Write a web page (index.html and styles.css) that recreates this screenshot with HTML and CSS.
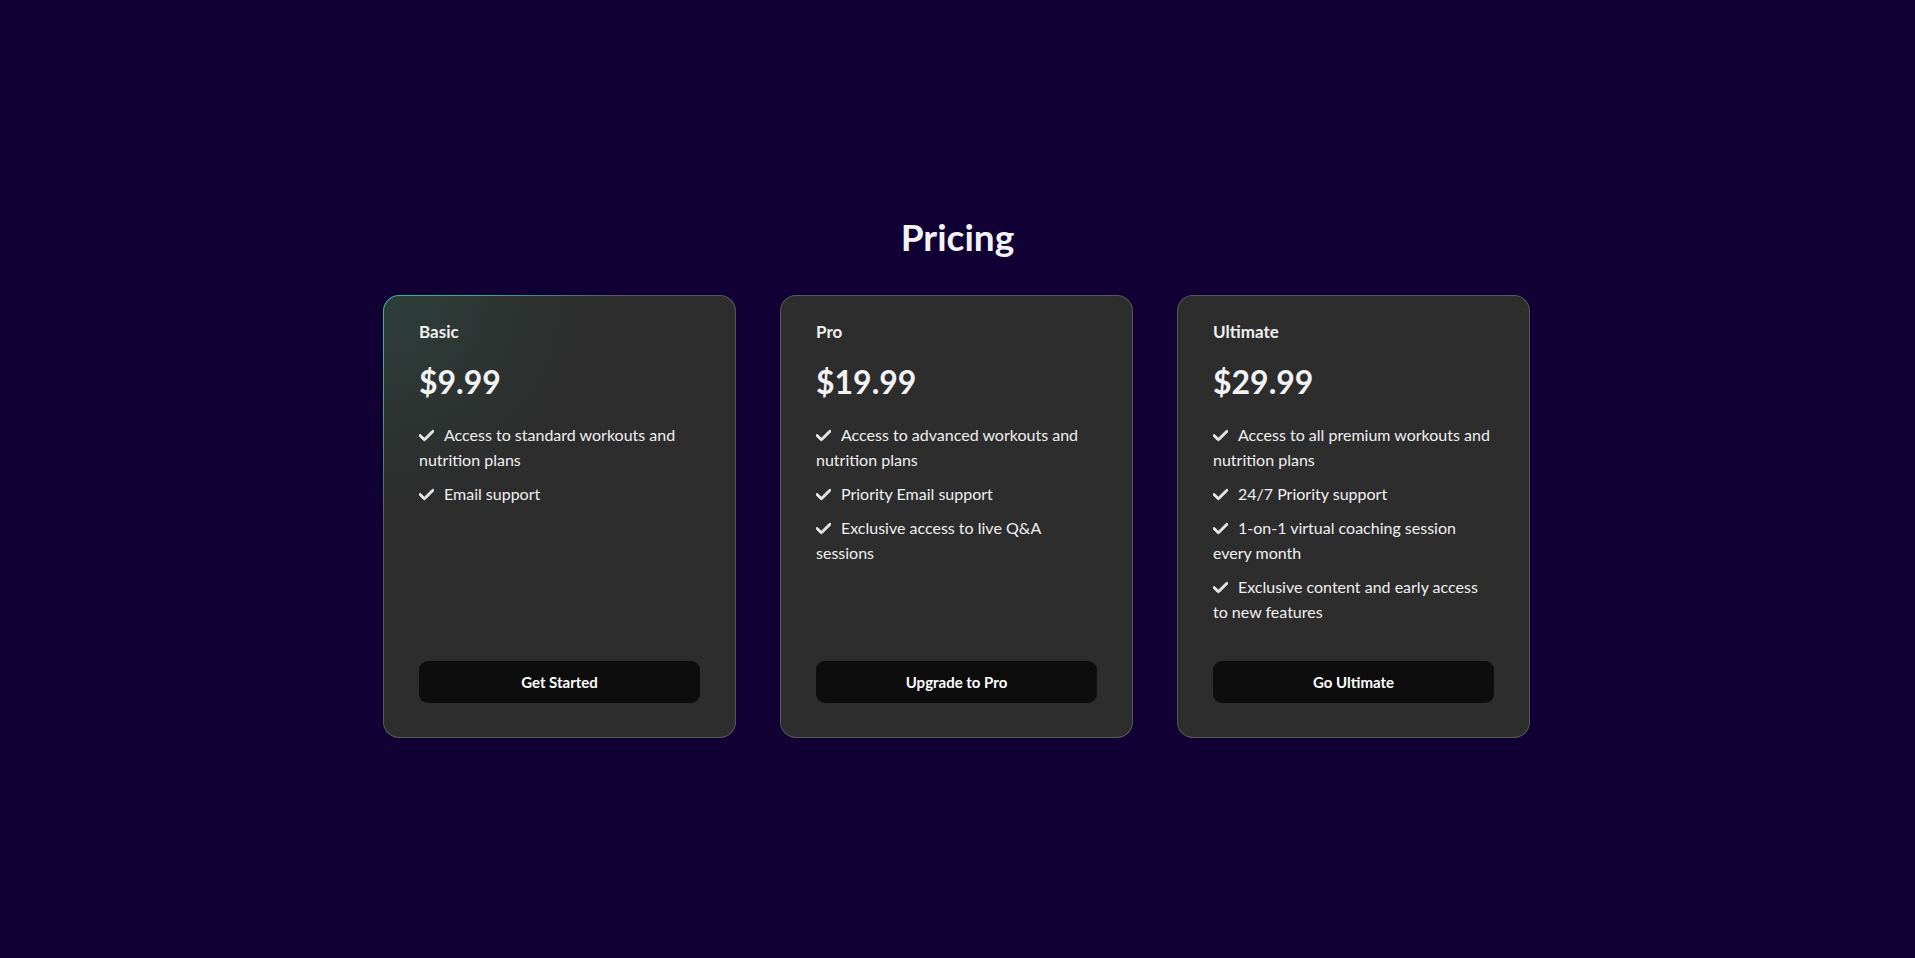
FILE: index.html
```html
<!DOCTYPE html>
<html lang="en">
<head>
<meta charset="utf-8">
<title>Pricing</title>
<link rel="stylesheet" href="styles.css">
</head>
<body>
<section class="pricing">
  <h2 class="pricing-title">Pricing</h2>
  <div class="plans">
    <div class="plan plan-active">
      <h3 class="plan-name">Basic</h3>
      <p class="plan-price">$9.99</p>
      <ul class="features">
        <li><svg class="check" viewBox="0 0 448 512"><path d="M438.6 105.4c12.5 12.5 12.5 32.8 0 45.3l-256 256c-12.5 12.5-32.8 12.5-45.3 0l-128-128c-12.5-12.5-12.5-32.8 0-45.3s32.8-12.5 45.3 0L160 338.7 393.4 105.4c12.5-12.5 32.8-12.5 45.3 0z"/></svg>Access to standard workouts and nutrition plans</li>
        <li><svg class="check" viewBox="0 0 448 512"><path d="M438.6 105.4c12.5 12.5 12.5 32.8 0 45.3l-256 256c-12.5 12.5-32.8 12.5-45.3 0l-128-128c-12.5-12.5-12.5-32.8 0-45.3s32.8-12.5 45.3 0L160 338.7 393.4 105.4c12.5-12.5 32.8-12.5 45.3 0z"/></svg>Email support</li>
      </ul>
      <button class="plan-btn">Get Started</button>
    </div>
    <div class="plan">
      <h3 class="plan-name">Pro</h3>
      <p class="plan-price">$19.99</p>
      <ul class="features">
        <li><svg class="check" viewBox="0 0 448 512"><path d="M438.6 105.4c12.5 12.5 12.5 32.8 0 45.3l-256 256c-12.5 12.5-32.8 12.5-45.3 0l-128-128c-12.5-12.5-12.5-32.8 0-45.3s32.8-12.5 45.3 0L160 338.7 393.4 105.4c12.5-12.5 32.8-12.5 45.3 0z"/></svg>Access to advanced workouts and nutrition plans</li>
        <li><svg class="check" viewBox="0 0 448 512"><path d="M438.6 105.4c12.5 12.5 12.5 32.8 0 45.3l-256 256c-12.5 12.5-32.8 12.5-45.3 0l-128-128c-12.5-12.5-12.5-32.8 0-45.3s32.8-12.5 45.3 0L160 338.7 393.4 105.4c12.5-12.5 32.8-12.5 45.3 0z"/></svg>Priority Email support</li>
        <li><svg class="check" viewBox="0 0 448 512"><path d="M438.6 105.4c12.5 12.5 12.5 32.8 0 45.3l-256 256c-12.5 12.5-32.8 12.5-45.3 0l-128-128c-12.5-12.5-12.5-32.8 0-45.3s32.8-12.5 45.3 0L160 338.7 393.4 105.4c12.5-12.5 32.8-12.5 45.3 0z"/></svg>Exclusive access to live Q&amp;A sessions</li>
      </ul>
      <button class="plan-btn">Upgrade to Pro</button>
    </div>
    <div class="plan">
      <h3 class="plan-name">Ultimate</h3>
      <p class="plan-price">$29.99</p>
      <ul class="features">
        <li><svg class="check" viewBox="0 0 448 512"><path d="M438.6 105.4c12.5 12.5 12.5 32.8 0 45.3l-256 256c-12.5 12.5-32.8 12.5-45.3 0l-128-128c-12.5-12.5-12.5-32.8 0-45.3s32.8-12.5 45.3 0L160 338.7 393.4 105.4c12.5-12.5 32.8-12.5 45.3 0z"/></svg>Access to all premium workouts and nutrition plans</li>
        <li><svg class="check" viewBox="0 0 448 512"><path d="M438.6 105.4c12.5 12.5 12.5 32.8 0 45.3l-256 256c-12.5 12.5-32.8 12.5-45.3 0l-128-128c-12.5-12.5-12.5-32.8 0-45.3s32.8-12.5 45.3 0L160 338.7 393.4 105.4c12.5-12.5 32.8-12.5 45.3 0z"/></svg>24/7 Priority support</li>
        <li><svg class="check" viewBox="0 0 448 512"><path d="M438.6 105.4c12.5 12.5 12.5 32.8 0 45.3l-256 256c-12.5 12.5-32.8 12.5-45.3 0l-128-128c-12.5-12.5-12.5-32.8 0-45.3s32.8-12.5 45.3 0L160 338.7 393.4 105.4c12.5-12.5 32.8-12.5 45.3 0z"/></svg>1-on-1 virtual coaching session every month</li>
        <li><svg class="check" viewBox="0 0 448 512"><path d="M438.6 105.4c12.5 12.5 12.5 32.8 0 45.3l-256 256c-12.5 12.5-32.8 12.5-45.3 0l-128-128c-12.5-12.5-12.5-32.8 0-45.3s32.8-12.5 45.3 0L160 338.7 393.4 105.4c12.5-12.5 32.8-12.5 45.3 0z"/></svg>Exclusive content and early access to new features</li>
      </ul>
      <button class="plan-btn">Go Ultimate</button>
    </div>
  </div>
</section>
</body>
</html>
```
FILE: styles.css
```css
* { box-sizing: border-box; }
html, body { margin: 0; padding: 0; }
body {
  background: #110033;
  color: #f2f2f2;
  font-family: "Lato", "Noto Sans", sans-serif;
  min-height: 100vh;
}
.pricing {
  min-height: 100vh;
  display: flex;
  flex-direction: column;
  align-items: center;
  justify-content: center;
  padding: 0 0 8px 0;
}
.pricing-title {
  margin: 0 0 34px;
  font-size: 37px;
  line-height: 48px;
  font-weight: 700;
  color: #f3f3f5;
}
.plans {
  display: grid;
  grid-template-columns: repeat(3, 353px);
  gap: 44px;
  margin-right: 2px;
}
.plan {
  display: flex;
  flex-direction: column;
  padding: 24px 35px 34px;
  border-radius: 16px;
  border: 1px solid transparent;
  background:
    linear-gradient(#2d2d2d, #2d2d2d) padding-box,
    linear-gradient(#575757, #575757) border-box;
  min-height: 443px;
}
.plan-active {
  background:
    radial-gradient(circle at 0 0, rgba(46, 180, 146, 0.13), rgba(46, 180, 146, 0) 200px) padding-box,
    linear-gradient(#2d2d2d, #2d2d2d) padding-box,
    radial-gradient(circle at 0 0, #2fbf98 0, #35a587 110px, #575757 240px) border-box;
}
.plan-name {
  margin: 0;
  font-size: 17px;
  line-height: 24px;
  font-weight: 700;
  color: #f0f0f0;
}
.plan-price {
  margin: 18px 0 0;
  font-size: 32px;
  line-height: 40px;
  font-weight: 700;
  color: #f3f3f5;
}
.features {
  list-style: none;
  margin: 20px 0 0;
  padding: 0;
  font-size: 16px;
  line-height: 25px;
  color: #f0f0f0;
}
.features li { margin-bottom: 9px; }
.check {
  width: 15px;
  height: 17px;
  fill: #e8e8e8;
  stroke: #e8e8e8;
  stroke-width: 30;
  vertical-align: -3px;
  margin-right: 10px;
}
.plan-btn {
  margin-top: auto;
  height: 42px;
  width: 100%;
  border: none;
  border-radius: 9px;
  background: #0d0d0d;
  color: #fff;
  font-family: inherit;
  font-size: 15px;
  font-weight: 700;
}
```
